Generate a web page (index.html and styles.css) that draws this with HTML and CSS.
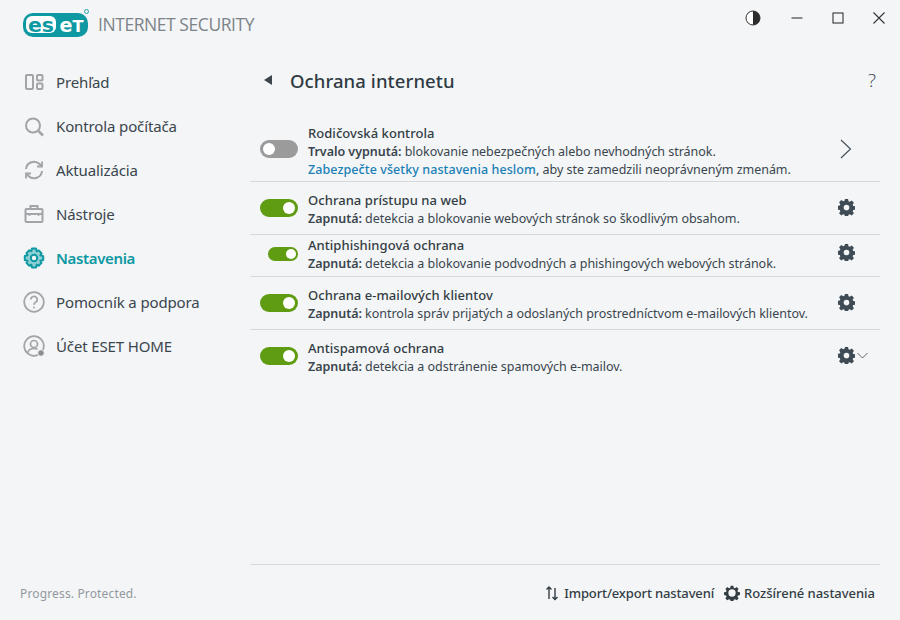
FILE: index.html
```html
<!DOCTYPE html>
<html lang="sk">
<head>
<meta charset="utf-8">
<title>ESET Internet Security</title>
<link rel="stylesheet" href="styles.css">
</head>
<body>
<div class="app">
  <aside class="side">
    <div class="brand">
      <svg class="logo" width="66" height="28" viewBox="0 0 66 28">
        <rect x="0" y="4" width="65" height="24" rx="10" fill="#0e98a2"/>
        <rect x="3" y="7" width="30" height="17" rx="6" fill="#fff"/>
        <text class="logo-a" x="5" y="22.500" textLength="26" lengthAdjust="spacingAndGlyphs">es</text>
        <text class="logo-b" x="36.500" y="22.500" textLength="13" lengthAdjust="spacingAndGlyphs">e</text>
        <text class="logo-c" x="49.500" y="22.500" textLength="11" lengthAdjust="spacingAndGlyphs">T</text>
        <circle cx="63.500" cy="2.500" r="2" fill="none" stroke="#0e98a2" stroke-width=".9"/>
      </svg>
      <span class="product">INTERNET SECURITY</span>
    </div>
    <nav class="nav">
      <a class="nav-item"><svg class="nav-ico" viewBox="0 0 22 22" fill="none" stroke="#a2a5a8" stroke-width="2"><rect x="3" y="4" width="7" height="14" rx="1"/><rect x="14" y="4" width="5.500" height="5.500" rx="1"/><rect x="14" y="12.500" width="5.500" height="5.500" rx="1"/></svg>Prehľad</a>
      <a class="nav-item"><svg class="nav-ico" viewBox="0 0 22 22" fill="none" stroke="#a2a5a8" stroke-width="2"><circle cx="10" cy="10.500" r="7"/><path d="M15.500 16l4.500 4.500" stroke-width="2.500"/></svg>Kontrola počítača</a>
      <a class="nav-item"><svg class="nav-ico" viewBox="0 0 22 22" fill="none" stroke="#a2a5a8" stroke-width="2"><path d="M3 10A8 8 0 0 1 16.500 5l2 2"/><path d="M19 2.500v5h-5" stroke-width="1.800"/><path d="M19 12A8 8 0 0 1 5.500 17l-2-2"/><path d="M3 19.500v-5h5" stroke-width="1.800"/></svg>Aktualizácia</a>
      <a class="nav-item"><svg class="nav-ico" viewBox="0 0 22 22" fill="none" stroke="#a2a5a8" stroke-width="2"><rect x="2.500" y="6" width="17" height="13" rx="1"/><path d="M7.500 6V3h7v3M2.500 11h17"/><path d="M6.500 10v3M15.500 10v3" stroke-width="1.500"/></svg>Nástroje</a>
      <a class="nav-item is-active"><svg class="nav-ico" viewBox="0 0 22 22" fill="none" stroke="#0e98a2" stroke-width="2"><path d="M9 1.500h4l.7 2.800 2-.9 2.800 2.800-1.100 2.100 2.800.8v4l-2.800.7 1.100 2.100-2.800 2.800-2-1.100-.7 2.800H9l-.7-2.800-2 1.100-2.800-2.800 1.100-2.100-2.800-.7V9l2.800-.8-1.100-2.100 2.800-2.800 2 .9z" stroke-linejoin="round" fill="#8fd0d5"/><circle cx="11" cy="11" r="3.200" fill="#f3f5f7"/></svg>Nastavenia</a>
      <a class="nav-item"><svg class="nav-ico" viewBox="0 0 22 22" fill="none" stroke="#a2a5a8" stroke-width="1.700"><circle cx="11" cy="11" r="9.800"/><path d="M7.800 8.500a3.200 3.200 0 1 1 4.800 2.800c-1 .6-1.600 1.200-1.600 2.400" stroke-width="1.800"/><circle cx="11" cy="16.500" r="1" fill="#a2a5a8" stroke="none"/></svg>Pomocník a podpora</a>
      <a class="nav-item"><svg class="nav-ico" viewBox="0 0 22 22" fill="none" stroke="#a2a5a8" stroke-width="1.700"><circle cx="11" cy="11" r="9.800"/><circle cx="11" cy="9" r="3.500"/><path d="M4.500 18c1-3.500 3.500-4.500 6.500-4.500 1.500 0 2.500.3 3.500.8"/><circle cx="18" cy="18" r="3.300" fill="#8a8d90" stroke="#f3f5f7" stroke-width="1"/></svg>Účet ESET HOME</a>
    </nav>
    <div class="tagline">Progress. Protected.</div>
  </aside>
  <main class="main">
    <div class="winbar">
      <svg class="win-ico contrast" viewBox="0 0 16 16"><circle cx="8" cy="8" r="7" fill="#fff" stroke="#333" stroke-width="1"/><path d="M8 1a7 7 0 0 1 0 14z" fill="#2c2c2c"/></svg>
      <svg class="win-ico" viewBox="0 0 16 16"><path d="M2.500 8h11" stroke="#333" stroke-width="1.100" fill="none"/></svg>
      <svg class="win-ico" viewBox="0 0 16 16"><rect x="3" y="3" width="10" height="10" fill="none" stroke="#333" stroke-width="1.100"/></svg>
      <svg class="win-ico" viewBox="0 0 16 16"><path d="M2.500 2.500l11 11M13.500 2.500l-11 11" stroke="#333" stroke-width="1.100" fill="none"/></svg>
    </div>
    <header class="head">
      <svg class="back" width="8" height="10" viewBox="0 0 8 10"><path d="M8 0v10L0 5z" fill="#3a454d"/></svg>
      <h1 class="title">Ochrana internetu</h1>
      <span class="help">?</span>
    </header>
    <section class="list">
      <div class="row row-parent">
        <span class="toggle off"></span>
        <div class="txt"><div class="t">Rodičovská kontrola</div><div class="d"><b>Trvalo vypnutá:</b> blokovanie nebezpečných alebo nevhodných stránok.</div><div class="d"><a class="link">Zabezpečte všetky nastavenia heslom</a>, aby ste zamedzili neoprávneným zmenám.</div></div>
        <div class="act act-chevron"><svg width="12" height="20" viewBox="0 0 12 20"><path d="M1 1l9.500 9L1 19" fill="none" stroke="#3f4a52" stroke-width="1.100"/></svg></div>
      </div>
      <div class="row row-web">
        <span class="toggle on"></span>
        <div class="txt"><div class="t">Ochrana prístupu na web</div><div class="d"><b>Zapnutá:</b> detekcia a blokovanie webových stránok so škodlivým obsahom.</div></div>
        <div class="act"><svg class="gear" viewBox="0 0 24 24"><use href="#gear"/></svg></div>
      </div>
      <div class="row row-phish">
        <span class="toggle on small"></span>
        <div class="txt"><div class="t">Antiphishingová ochrana</div><div class="d"><b>Zapnutá:</b> detekcia a blokovanie podvodných a phishingových webových stránok.</div></div>
        <div class="act"><svg class="gear" viewBox="0 0 24 24"><use href="#gear"/></svg></div>
      </div>
      <div class="row row-web">
        <span class="toggle on"></span>
        <div class="txt"><div class="t">Ochrana e-mailových klientov</div><div class="d"><b>Zapnutá:</b> kontrola správ prijatých a odoslaných prostredníctvom e-mailových klientov.</div></div>
        <div class="act"><svg class="gear" viewBox="0 0 24 24"><use href="#gear"/></svg></div>
      </div>
      <div class="row row-last">
        <span class="toggle on"></span>
        <div class="txt"><div class="t">Antispamová ochrana</div><div class="d"><b>Zapnutá:</b> detekcia a odstránenie spamových e-mailov.</div></div>
        <div class="act"><svg class="gear" viewBox="0 0 24 24"><use href="#gear"/></svg><svg class="chev" width="11" height="7" viewBox="0 0 11 7"><path d="M.5 1l5 5 5-5" fill="none" stroke="#5b656c" stroke-width="1"/></svg></div>
      </div>
    </section>
    <footer class="foot">
      <a class="foot-link link-import"><svg width="14" height="16" viewBox="0 0 14 16" fill="none" stroke="#333d44" stroke-width="1.400"><path d="M4 14V2M1.500 4.500L4 2l2.500 2.500M10 3v11.500M7.500 12l2.500 2.500 2.500-2.500"/></svg>Import/export nastavení</a>
      <a class="foot-link"><svg class="gear-foot" viewBox="0 0 24 24"><path fill="#333d44" fill-rule="evenodd" d="M10 1h4l.6 3 1.900.8 2.600-1.700 2.800 2.800-1.700 2.600.8 1.900 3 .6v4l-3 .6-.8 1.900 1.700 2.600-2.800 2.800-2.600-1.700-1.900.8-.6 3h-4l-.6-3-1.900-.8-2.600 1.700-2.800-2.800 1.700-2.600-.8-1.900-3-.6v-4l3-.6.8-1.900-1.700-2.600 2.800-2.800 2.600 1.700 1.900-.8zM12 6.500a5.500 5.500 0 1 0 0 11 5.500 5.500 0 0 0 0-11z"/></svg>Rozšírené nastavenia</a>
    </footer>
  </main>
</div>
<svg class="defs" width="0" height="0"><defs><path id="gear" fill="#3f4c55" fill-rule="evenodd" d="M9.800 0h4.400l.6 3.200 1.900.8 2.700-1.800 3.100 3.100-1.800 2.700.8 1.900 3.200.6v4.400l-3.200.6-.8 1.900 1.800 2.700-3.100 3.100-2.700-1.800-1.900.8-.6 3.200H9.800l-.6-3.200-1.900-.8-2.700 1.800-3.100-3.100 1.800-2.700-.8-1.900-3.200-.6V9.800l3.200-.6.8-1.900-1.800-2.700 3.100-3.100 2.700 1.800 1.900-.8zM12 8a4 4 0 1 0 0 8 4 4 0 0 0 0-8z"/></defs></svg>
</body>
</html>
```
FILE: styles.css
```css
* { box-sizing: border-box; }
html, body { margin: 0; height: 100%; }
body {
  background: #f3f5f7;
  color: #3a454d;
  font-family: "Noto Sans", "Open Sans", sans-serif;
  overflow: hidden;
}
.defs { display: block; height: 0; }
.app { display: flex; width: 900px; height: 620px; }
.side { width: 250px; display: flex; flex-direction: column; flex: none; }
.brand { display: flex; align-items: center; height: 38px; margin-top: 4px; padding-left: 23px; }
.logo { display: block; flex: none; }
.logo-a, .logo-b { font-family: "DejaVu Sans", sans-serif; font-size: 20px; font-weight: 700; }
.logo-c { font-family: "DejaVu Sans", sans-serif; font-size: 15.500px; font-weight: 700; fill: #fff; }
.logo-a { fill: #0e98a2; }
.logo-b { fill: #fff; }
.product { margin-left: 9px; margin-top: 2px; font-size: 17.500px; color: #7d8388; letter-spacing: -0.44px; white-space: nowrap; font-family: "Open Sans", sans-serif; }
.nav { display: flex; flex-direction: column; margin-top: 18px; padding-left: 23px; }
.nav-item { display: flex; align-items: center; height: 44px; font-size: 15px; letter-spacing: -0.13px; color: #3a454d; }
.nav-ico { width: 22px; height: 22px; margin-right: 11px; flex: none; }
.is-active { color: #0e98a2; font-weight: 600; letter-spacing: -0.35px; }
.tagline { margin-top: auto; padding: 0 0 18px 20px; font-size: 12px; line-height: 16px; letter-spacing: 0.15px; color: #94999e; }
.main { flex: 1; display: flex; flex-direction: column; min-width: 0; }
.winbar { display: flex; justify-content: flex-end; align-items: center; gap: 25px; height: 35px; padding-right: 13px; }
.win-ico { width: 16px; height: 16px; display: block; }
.contrast { margin-right: 3px; }
.head { display: flex; align-items: center; height: 52px; padding: 0 24px 0 14px; margin-top: 19px; }
.back { flex: none; }
.title { margin: 0 0 0 18px; font-size: 18.500px; font-weight: 500; letter-spacing: 0.08px; color: #2f3a42; }
.help { margin-left: auto; font-size: 19px; font-weight: 300; color: #3a454d; font-family: "Open Sans", sans-serif; }
.list { margin: 17px 20px 0 0; }
.row { display: grid; grid-template-columns: 48px 1fr 44px; column-gap: 10px; align-items: center; border-bottom: 1px solid #d6d8da; }
.row-parent { padding: 1px 0 2px; }
.row-web { padding: 9px 0 6px; }
.row-phish { padding: 1px 0 3px; }
.row-last { padding: 9px 0 6px; border-bottom: 0; }
.t { font-size: 13px; line-height: 19px; font-weight: 500; color: #333d44; letter-spacing: 0.05px; }
.d { font-size: 12.500px; line-height: 18px; color: #3a454d; white-space: nowrap; letter-spacing: -0.03px; }
.d b { font-weight: 600; }
.link { color: #1a7fb5; font-weight: 500; letter-spacing: 0.08px; }
.toggle { position: relative; display: block; justify-self: end; width: 38px; height: 18px; border-radius: 9px; margin-bottom: 3px; }
.row-parent .toggle { margin-bottom: 5px; }
.toggle::after { content: ""; position: absolute; top: 3px; width: 12px; height: 12px; border-radius: 50%; background: #fff; }
.on { background: #5f9c12; }
.on::after { right: 3px; }
.off { background: #9b9b9b; }
.off::after { left: 3px; }
.small { width: 30px; height: 14px; border-radius: 7px; margin-bottom: 1px; }
.small::after { top: 2px; width: 10px; height: 10px; right: 2px; }
.act { display: flex; align-items: center; padding-left: 2px; height: 20px; margin-bottom: 5px; }
.act-chevron { padding-left: 4px; margin-bottom: 5px; }
.gear { width: 17px; height: 17px; flex: none; }
.chev { margin-left: 2px; flex: none; }
.foot { margin-top: auto; height: 56px; margin-right: 20px; border-top: 1px solid #d6d8da; display: flex; justify-content: flex-end; align-items: center; gap: 10px; padding: 0 5px 0 0; }
.foot-link { display: flex; align-items: center; gap: 4px; font-size: 13px; font-weight: 500; color: #333d44; letter-spacing: -0.03px; }
.link-import { gap: 5px; letter-spacing: -0.13px; }
.gear-foot { width: 16px; height: 16px; }
```
